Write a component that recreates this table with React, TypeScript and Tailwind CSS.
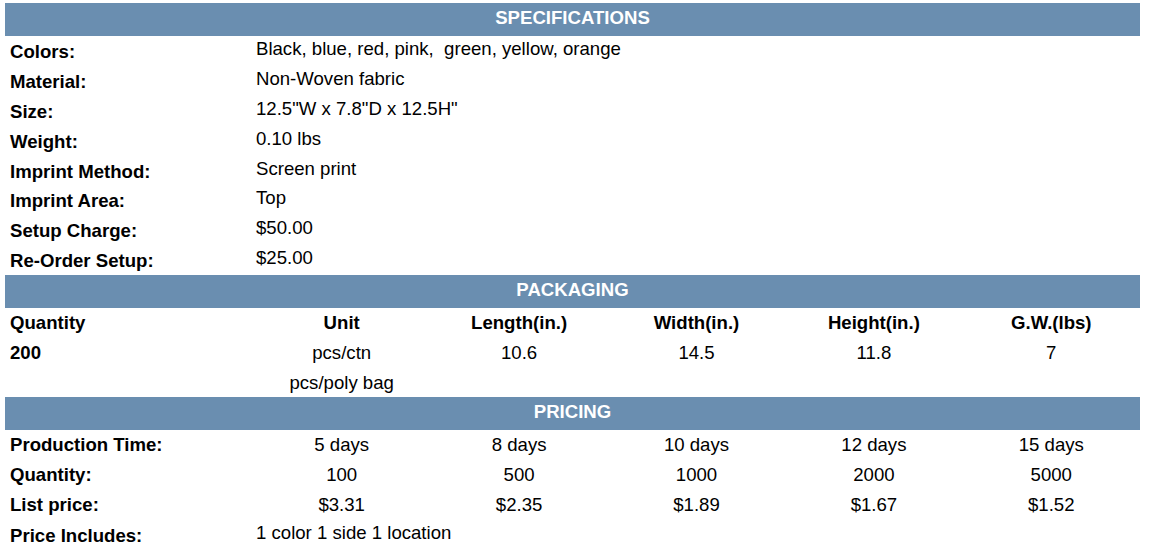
import React from "react";

const specs: [string, string][] = [
  ["Colors:", "Black, blue, red, pink,\u00a0 green, yellow, orange"],
  ["Material:", "Non-Woven fabric"],
  ["Size:", '12.5"W x 7.8"D x 12.5H"'],
  ["Weight:", "0.10 lbs"],
  ["Imprint Method:", "Screen print"],
  ["Imprint Area:", "Top"],
  ["Setup Charge:", "$50.00"],
  ["Re-Order Setup:", "$25.00"],
];

function Bar({ title }: { title: string }) {
  return (
    <div className="h-[33px] pb-[3px] bg-[#6a8eb0] flex items-center justify-center text-white font-bold text-[18.6px]">
      {title}
    </div>
  );
}

const rowCls = "grid grid-cols-[248px_repeat(5,1fr)] h-[29.8px]";

export default function App() {
  return (
    <div
      className="w-[1152px] h-[548px] bg-white overflow-hidden text-black text-[18.6px] leading-[20px]"
      style={{ fontFamily: '"Liberation Sans", Arial, sans-serif' }}
    >
      <div className="ml-[5px] mt-[3px] w-[1135px]">
        <Bar title="SPECIFICATIONS" />
        {specs.map(([l, v]) => (
          <div key={l} className="grid grid-cols-[248px_1fr] h-[29.875px]">
            <div className="pl-[5px] pt-[6px] font-bold">{l}</div>
            <div className="pl-[3px] pt-[3px]">{v}</div>
          </div>
        ))}
        <Bar title="PACKAGING" />
        <div className={rowCls}>
          <div className="pl-[5px] pt-[5px] font-bold">Quantity</div>
          {["Unit", "Length(in.)", "Width(in.)", "Height(in.)", "G.W.(lbs)"].map((h) => (
            <div key={h} className="text-center pt-[5px] font-bold">{h}</div>
          ))}
        </div>
        <div className={rowCls}>
          <div className="pl-[5px] pt-[5px] font-bold">200</div>
          {["pcs/ctn", "10.6", "14.5", "11.8", "7"].map((h, i) => (
            <div key={i} className="text-center pt-[5px]">{h}</div>
          ))}
        </div>
        <div className={rowCls}>
          <div />
          <div className="text-center pt-[5px]">pcs/poly bag</div>
        </div>
        <Bar title="PRICING" />
        <div className={rowCls}>
          <div className="pl-[5px] pt-[5px] font-bold">Production Time:</div>
          {["5 days", "8 days", "10 days", "12 days", "15 days"].map((h) => (
            <div key={h} className="text-center pt-[5px]">{h}</div>
          ))}
        </div>
        <div className={rowCls}>
          <div className="pl-[5px] pt-[5px] font-bold">Quantity:</div>
          {["100", "500", "1000", "2000", "5000"].map((h) => (
            <div key={h} className="text-center pt-[5px]">{h}</div>
          ))}
        </div>
        <div className={rowCls}>
          <div className="pl-[5px] pt-[5px] font-bold">List price:</div>
          {["$3.31", "$2.35", "$1.89", "$1.67", "$1.52"].map((h) => (
            <div key={h} className="text-center pt-[5px]">{h}</div>
          ))}
        </div>
        <div className="grid grid-cols-[248px_1fr] h-[29.8px]">
          <div className="pl-[5px] pt-[6px] font-bold">Price Includes:</div>
          <div className="pl-[3px] pt-[3px]">1 color 1 side 1 location</div>
        </div>
      </div>
    </div>
  );
}
